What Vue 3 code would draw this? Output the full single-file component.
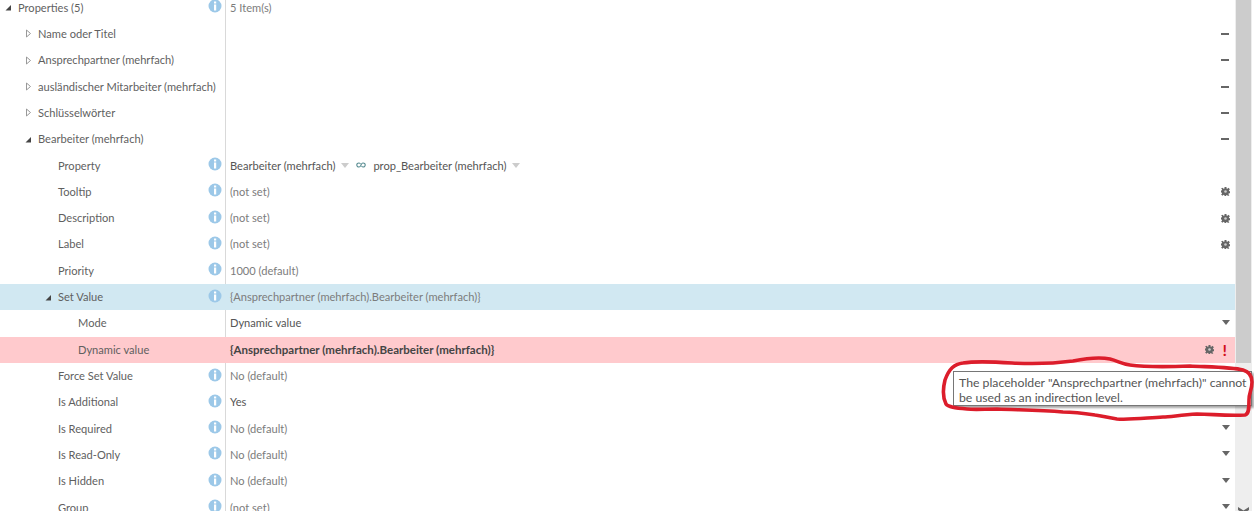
<script setup>
const rows = [
  { name: 'Properties (5)', level: 0, arrow: 'open', info: true, value: '5 Item(s)', kind: 'muted' },
  { name: 'Name oder Titel', level: 1, arrow: 'closed', action: 'dash' },
  { name: 'Ansprechpartner (mehrfach)', level: 1, arrow: 'closed', action: 'dash' },
  { name: 'ausländischer Mitarbeiter (mehrfach)', level: 1, arrow: 'closed', action: 'dash' },
  { name: 'Schlüsselwörter', level: 1, arrow: 'closed', action: 'dash' },
  { name: 'Bearbeiter (mehrfach)', level: 1, arrow: 'open', action: 'dash' },
  { name: 'Property', level: 2, info: true, binding: true },
  { name: 'Tooltip', level: 2, info: true, value: '(not set)', kind: 'muted', action: 'gear' },
  { name: 'Description', level: 2, info: true, value: '(not set)', kind: 'muted', action: 'gear' },
  { name: 'Label', level: 2, info: true, value: '(not set)', kind: 'muted', action: 'gear' },
  { name: 'Priority', level: 2, info: true, value: '1000 (default)', kind: 'muted' },
  { name: 'Set Value', level: 2, arrow: 'open', info: true, value: '{Ansprechpartner (mehrfach).Bearbeiter (mehrfach)}', kind: 'muted', tone: 'selected' },
  { name: 'Mode', level: 3, value: 'Dynamic value', action: 'drop' },
  { name: 'Dynamic value', level: 3, value: '{Ansprechpartner (mehrfach).Bearbeiter (mehrfach)}', kind: 'strong', tone: 'error', action: 'error' },
  { name: 'Force Set Value', level: 2, info: true, value: 'No (default)', kind: 'muted', action: 'drop' },
  { name: 'Is Additional', level: 2, info: true, value: 'Yes', action: 'drop' },
  { name: 'Is Required', level: 2, info: true, value: 'No (default)', kind: 'muted', action: 'drop' },
  { name: 'Is Read-Only', level: 2, info: true, value: 'No (default)', kind: 'muted', action: 'drop' },
  { name: 'Is Hidden', level: 2, info: true, value: 'No (default)', kind: 'muted', action: 'drop' },
  { name: 'Group', level: 2, info: true, value: '(not set)', kind: 'muted', action: 'drop' },
]
const gear = 'M3.500 0h2v1.400l1 .4 1-1 1.400 1.400-1 1 .4 1H9v2H7.800l-.4 1 1 1L7 9l-1-1-1 .4V9H3.500V8.200l-1-.4-1 1L.1 7.400l1-1-.4-1H0v-2h.7l.4-1-1-1L1.500.8l1 1 1-.4z'
</script>

<template>
  <div class="page">
    <div class="grid">
      <div v-for="row in rows" :key="row.name" class="row" :class="row.tone">
        <div class="name" :style="{ paddingLeft: 18 + row.level * 20 + 'px' }">
          <svg v-if="row.arrow === 'closed'" class="arrow" viewBox="0 0 7 9"><path d="M1.500 1l4 3.500-4 3.500z" fill="#fff" stroke="#999" /></svg>
          <svg v-if="row.arrow === 'open'" class="arrow" viewBox="0 0 7 9"><path d="M6 2v5.500H.5z" fill="#444" /></svg>
          <span class="label">{{ row.name }}</span>
          <svg v-if="row.info" class="info" viewBox="0 0 14 14"><circle cx="7" cy="7" r="6.500" fill="#9cc8e8" /><rect x="6" y="2.500" width="2.200" height="2" fill="#fff" /><rect x="6" y="5.500" width="2.200" height="6" fill="#fff" /></svg>
        </div>
        <div class="value" :class="row.kind">
          <template v-if="row.binding">
            <span>Bearbeiter (mehrfach)</span>
            <i class="caret" />
            <svg class="link" viewBox="0 0 10 6"><path d="M4.500 2A2 2 0 1 0 4.500 4L5.500 2A2 2 0 1 1 5.500 4" fill="none" stroke="#5c8f94" stroke-width="1.100" /></svg>
            <span>prop_Bearbeiter (mehrfach)</span>
            <i class="caret" />
          </template>
          <span v-else>{{ row.value }}</span>
        </div>
        <div class="action">
          <i v-if="row.action === 'dash'" class="dash" />
          <svg v-if="row.action === 'gear' || row.action === 'error'" class="gear" viewBox="0 0 9 9"><path :d="gear" fill="#666" /><circle cx="4.500" cy="4.500" r="1.300" fill="#ccc" /></svg>
          <span v-if="row.action === 'error'" class="bang">!</span>
          <i v-if="row.action === 'drop'" class="drop" />
        </div>
      </div>
    </div>
    <div class="scrollbar">
      <div class="thumb" />
      <svg class="down" viewBox="0 0 11 6"><path d="M0 0l5.500 3.500L11 0v3L5.500 6.500 0 3z" fill="#666" /></svg>
    </div>

    <div class="tooltip">The placeholder "Ansprechpartner (mehrfach)" cannot be used as an indirection level.</div>
    <svg class="scribble" viewBox="0 0 1254 511">
      <path d="M945 380C949 369 954 364 963 363C975 361 997 362 1012 363C1030 364 1050 364 1073 361C1088 358 1100 357 1110 359C1118 361 1122 364 1130 365C1145 367 1165 367 1190 366C1210 367 1232 367 1243 370C1250 372 1252 376 1252 382C1252 390 1249 392 1249 400C1249 408 1249 414 1245 415C1225 416 1212 414 1197 414C1180 415 1170 417 1163 417C1145 418 1130 420 1117 419C1108 418 1103 416 1095 415C1082 413 1075 412 1063 412C1040 410 1020 410 997 409C985 409 975 410 967 409C955 408 948 407 946 404C943 398 943 388 945 380Z" fill="none" stroke="#dc1d2b" stroke-width="3.600" />
    </svg>
  </div>
</template>

<style>
html, body { margin: 0; background: #fff; overflow: hidden; }
</style>

<style scoped>
.page {
  position: relative;
  display: flex;
  width: 1254px;
  height: 511px;
  overflow: hidden;
  background: #fff;
  font-family: Lato, "Open Sans", sans-serif;
  font-size: 11.1px;
  color: #5f5f5f;
}
.grid {
  width: 1235px;
  margin-top: -5.5px;
  flex: none;
}
.row {
  display: flex;
  align-items: center;
  height: 26.32px;
}
.row.selected { background: #d1e8f2; }
.row.error { background: #ffcacd; }
.name {
  position: relative;
  display: flex;
  align-items: center;
  align-self: stretch;
  width: 226px;
  box-sizing: border-box;
  border-right: 1px solid #d9d9d9;
  white-space: nowrap;
}
.row.selected .name, .row.error .name { border-right-color: transparent; }
.arrow {
  position: absolute;
  width: 7px;
  height: 9px;
  margin-left: -13px;
}
.label { flex: 1; padding-bottom: 1px; }
.info {
  width: 14px;
  height: 14px;
  margin-right: 3px;
  margin-top: -3px;
}
.value {
  display: flex;
  align-items: center;
  flex: 1;
  padding-left: 4px;
  padding-bottom: 1px;
  color: #555;
  white-space: nowrap;
}
.value.muted { color: #7c7c7c; }
.value.strong { color: #444; font-size: 11.5px; font-weight: 700; }
.caret {
  width: 0;
  height: 0;
  margin: 0 7px 0 6px;
  border-left: 4px solid transparent;
  border-right: 4px solid transparent;
  border-top: 5px solid #ccc;
}
.link { width: 10px; height: 6px; margin: 0 7px 0 0; }
.action {
  display: flex;
  align-items: center;
  justify-content: flex-end;
  width: 40px;
  box-sizing: border-box;
  padding-right: 5px;
  flex: none;
}
.dash { width: 8px; height: 2px; margin-right: 1px; flex: none; background: #666; }
.gear { width: 9px; height: 9px; flex: none; }
.row.error .gear { margin-right: 9px; }
.bang { margin-right: 3px; color: #d2101c; font-size: 16px; font-weight: 700; line-height: 1; }
.drop {
  flex: none;
  margin-top: -2px;
  border-left: 4px solid transparent;
  border-right: 4px solid transparent;
  border-top: 5px solid #666;
}
.scrollbar {
  position: relative;
  width: 17px;
  height: 511px;
  flex: none;
  background: #eee;
}
.thumb { width: 15px; height: 363px; margin-left: 1px; background: #ccc; }
.down { position: absolute; left: 3px; top: 507px; width: 11px; height: 6px; }
.tooltip {
  position: absolute;
  left: 953px;
  top: 371px;
  width: 299px;
  height: 35px;
  box-sizing: border-box;
  padding: 3px 1px 3px 5px;
  border: 1px solid #767676;
  background: #fff;
  box-shadow: 2px 2px 2px rgba(0, 0, 0, .35);
  font-size: 12.25px;
  line-height: 15px;
  color: #555;
}
.scribble {
  position: absolute;
  inset: 0;
  width: 1254px;
  height: 511px;
  pointer-events: none;
}
</style>
